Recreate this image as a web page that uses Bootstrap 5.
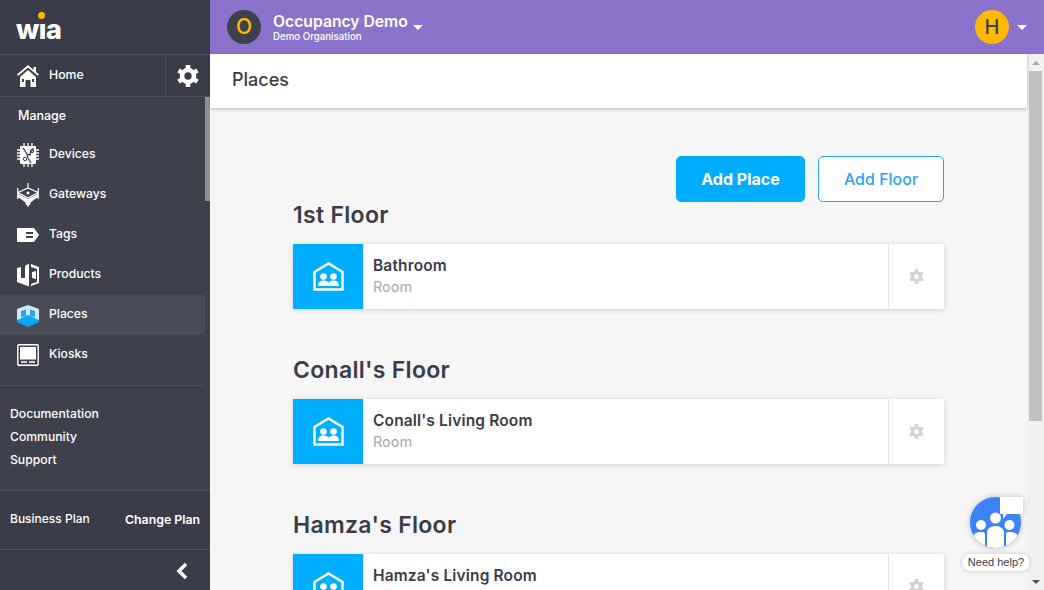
<!DOCTYPE html>
<html lang="en"><head><meta charset="utf-8"><title>Places</title>
<link href="https://cdn.jsdelivr.net/npm/bootstrap@5.3.0/dist/css/bootstrap.min.css" rel="stylesheet">
<style>
html,body{height:100%;overflow:hidden}
body{font-family:"Inter","Liberation Sans",sans-serif;color:#3a3c4a;background:#f6f6f6}
.app-shell{height:590px}
.side-bar{width:210px;flex:none;background:#3a3c49;color:#fff}
.logo-row{height:54px;flex:none;padding-left:16px}
.wia-logo{font-weight:800;font-size:27px;line-height:1;letter-spacing:-.5px;position:relative;margin-top:4px}
.wia-dot{position:absolute;left:21.500px;top:-4px;width:7px;height:7px;border-radius:50%;background:#ffb900}
.home-row{height:43px;flex:none;border-top:1px solid #4d4f5c;border-bottom:1px solid #4d4f5c}
.home-link{width:166px;padding-left:17px;gap:10px;font-size:12.300px;font-weight:500;border-right:1px solid #4d4f5c}
.side-scroll{height:393px;flex:none;background:#3e404e;overflow:hidden}
.side-content{width:205px}
.thumb-track{width:5px}
.thumb-bar{height:104px;background:#929292}
.manage-label{font-size:12.500px;font-weight:500;padding:9px 0 0 18px;height:38px;line-height:20px}
.nav-entry{height:40px;padding-left:17px;padding-bottom:1px;gap:10px;font-size:12.200px;font-weight:500}
.nav-entry.is-on{background:#494c58}
.nav-ico{width:22px;height:24px;flex:none}
.doc-links{border-top:1px solid #4d4f5c;margin-top:10px;padding:16px 0 0 10px;font-size:12.200px;font-weight:500;line-height:23px}
.plan-row{height:59px;flex:none;border-top:1px solid #4d4f5c;padding:0 10px 2px;font-size:12px;font-weight:500}
.plan-change{font-size:12.300px;font-weight:600;margin-top:2px}
.collapse-row{height:42px;flex:none;border-top:1px solid #4d4f5c;padding-right:21px}
.top-bar{height:54px;flex:none;background:#8b72cb;color:#fff;padding:0 17px}
.org-avatar{width:34px;height:34px;border-radius:50%;background:#3e404e;color:#ffb900;font-size:21px;font-weight:500;line-height:34px;text-align:center}
.org-name{font-size:15.700px;font-weight:600;line-height:19px}
.org-sub{font-size:9.700px;font-weight:500;line-height:12px}
.org-caret{margin-left:5px}
.caret-mark{width:0;height:0;border:5px solid transparent;border-top:5px solid #fff;border-bottom:0}
.user-avatar{width:34px;height:34px;border-radius:50%;background:#ffb900;color:#3e404e;font-size:20px;font-weight:500;line-height:34px;text-align:center}
.body-row{height:536px}
.page-wrap{min-width:0}
.page-bar{height:54px;flex:none;background:#fff;padding:0 0 3px 22px;font-size:18px;font-weight:500;box-shadow:0 1px 3px rgba(0,0,0,.28);position:relative}
.page-main{overflow:hidden;background:#f6f6f6;padding:48px 83px 0 83px}
.fake-scroll{width:17px;flex:none;background:#f1f1f1}
.arrow-up,.arrow-down{height:17px;flex:none}
.arrow-up::before,.arrow-down::before{content:"";width:0;height:0;border:4px solid transparent}
.arrow-up::before{border-bottom:4px solid #a3a3a3;border-top:0}
.arrow-down::before{border-top:4px solid #505050;border-bottom:0}
.scroll-thumb{width:13px;height:350px;margin:0 2px;background:#c1c1c1}
.btn-place,.btn-floor{height:46px;font-size:16px;border-radius:5px}
.btn-place{width:129px;background:#00aeff;border:1px solid #00aeff;color:#fff;font-weight:700}
.btn-floor{width:126px;background:#fff;border:1px solid #2aa5ef;color:#2aa5ef;font-weight:500}
.action-row{gap:13px;height:46px}
.floor-block{height:155px}
.floor-title{font-size:23px;font-weight:600;line-height:28px;letter-spacing:.3px;margin:0 0 15px;color:#3a3c4a}
.first-floor{margin-top:-1px}
.room-card{height:65px;background:#fff;box-shadow:0 1px 5px rgba(0,0,0,.16)}
.room-ico{width:70px;flex:none;background:#00aeff}
.room-text{padding:12px 0 0 10px}
.room-name{font-size:15.500px;font-weight:600;line-height:20px;letter-spacing:.15px;color:#3a3c4a}
.room-kind{font-size:14.500px;line-height:20px;color:#a8a8ae;margin-top:1px}
.room-gear{width:56px;flex:none;border-left:1px solid #e6e6e6}
.help-widget{position:absolute;left:962px;top:497px;width:68px}
.help-circle{width:51px;height:51px;margin:0 0 0 8px;display:block;overflow:visible;filter:drop-shadow(0 0 3px rgba(0,0,0,.22))}
.help-tag{position:absolute;left:0;top:57px;width:68px;height:17px;border-radius:9px;background:#fff;box-shadow:0 0 4px rgba(0,0,0,.2);font-family:"Liberation Sans",sans-serif;font-size:11px;line-height:17px;text-align:center;color:#3a3c4a}
</style></head>
<body>
<svg width="0" height="0" class="position-absolute"><defs>
 <symbol id="cog" viewBox="0 0 24 24"><circle cx="12" cy="12" r="6.500" fill="none" stroke="currentColor" stroke-width="5"/><path stroke="currentColor" stroke-width="5" d="M12 0v6M12 18v6M1.600 6l5.200 3M17.200 15l5.200 3M22.400 6l-5.200 3M6.800 15l-5.200 3"/></symbol>
 <symbol id="roomic" viewBox="0 0 31 29"><path d="M1.500 27.500V10L15.500 1.500 29.500 10v17.500z" fill="none" stroke="#fff" stroke-width="2.400"/><circle cx="10.500" cy="14.500" r="3.300" fill="#fff"/><circle cx="20.500" cy="14.500" r="3.300" fill="#fff"/><path fill="#fff" d="M5 24c0-4 2-5.500 5.500-5.500 2 0 3.500.5 5 2 1.500-1.500 3-2 5-2 3.500 0 5.500 1.500 5.500 5.500z"/></symbol>
</defs></svg>
<div class="app-shell d-flex">
 <aside class="side-bar d-flex flex-column">
  <div class="logo-row d-flex align-items-center"><span class="wia-logo">wıa<span class="wia-dot"></span></span></div>
  <div class="home-row d-flex">
   <a class="home-link d-flex align-items-center text-white text-decoration-none">
    <svg class="nav-ico" viewBox="0 0 22 24" fill="#fff"><path d="M11 1 0 10.500l1.200 1.300L11 3.600l9.800 8.200 1.200-1.300-3-2.600V3h-2.500v3z"/><path fill-rule="evenodd" d="M3 13 11 6l8 7v10h-5.500v-7h-5v7H3zM5 15v3h2v-3zM15 15v3h2v-3z"/></svg>
    Home</a>
   <div class="flex-fill d-flex align-items-center justify-content-center text-white">
    <svg width="22" height="22"><use href="#cog"/></svg>
   </div>
  </div>
  <div class="side-scroll d-flex">
   <div class="side-content">
    <div class="manage-label">Manage</div>
    <a class="nav-entry d-flex align-items-center text-white text-decoration-none"><svg class="nav-ico" viewBox="0 0 22 24"><path fill="#fff" d="M4 3h14a1 1 0 0 1 1 1v16a1 1 0 0 1-1 1H4a1 1 0 0 1-1-1V4a1 1 0 0 1 1-1z"/><path stroke="#fff" stroke-width="1.300" d="M0 7h3M0 10h3M0 13h3M0 16h3M19 7h3M19 10h3M19 13h3M19 16h3M7 0v3M11 0v3M15 0v3M7 21v3M11 21v3M15 21v3"/><path fill="none" stroke="#3e404e" stroke-width="1.300" d="M6 5l4 6 1 4 3 5M16 5c0 4-3 3-3 7l-3-1"/><circle cx="8" cy="16" r="1.700" fill="none" stroke="#3e404e"/><circle cx="15" cy="8" r="1.700" fill="none" stroke="#3e404e"/></svg>Devices</a>
    <a class="nav-entry d-flex align-items-center text-white text-decoration-none"><svg class="nav-ico" viewBox="0 0 22 24"><path fill="none" stroke="#fff" stroke-width="1.200" d="M11 0v6M.7 5v11M21.300 5v11M1 9.500 11 5l10 4.500L11 15z"/><path fill="#fff" d="M1 11l10 5 10-5v3l-7.500 5.500h-5L1 14z"/><circle cx="11" cy="20" r="2.500" fill="#fff"/><path stroke="#fff" d="M11 20v4"/><circle cx="11" cy="10" r="1.500" fill="#fff"/></svg>Gateways</a>
    <a class="nav-entry d-flex align-items-center text-white text-decoration-none"><svg class="nav-ico" viewBox="0 0 22 24"><path fill="#fff" d="M0 5h17l5 7-5 7H0z"/><path stroke="#3e404e" stroke-width="1.800" d="M9 10h7M9 14h7"/></svg>Tags</a>
    <a class="nav-entry d-flex align-items-center text-white text-decoration-none"><svg class="nav-ico" viewBox="0 0 22 24" fill="#fff"><path d="M0 5l4-1v11h4V3l4-2.500v23L0 19z"/><path d="M14 1l8 3v16l-8 3v-2l6-2V6l-6-2z"/><path d="M15 9l4-1v8l-4-1z"/></svg>Products</a>
    <a class="nav-entry is-on d-flex align-items-center text-white text-decoration-none"><svg class="nav-ico" viewBox="0 0 22 24"><path fill="#cdeafc" d="M0 6 11 2l11 4v11l-11 5L0 17z"/><path fill="#2f9fe6" d="M4 8l5-1.500V13l-5 1zM13 6.500 18 8v6l-5-1z"/><path fill="#0aa5f0" d="M0 17l11-5 11 5v2l-11 5L0 19z"/></svg>Places</a>
    <a class="nav-entry d-flex align-items-center text-white text-decoration-none"><svg class="nav-ico" viewBox="0 0 22 24"><rect x=".8" y="1.800" width="20.400" height="20.400" rx="1" fill="none" stroke="#fff" stroke-width="1.400"/><rect x="3" y="4" width="16" height="12.500" fill="#fff"/><path stroke="#fff" stroke-width="1.500" d="M4 19h6M12 19h6"/></svg>Kiosks</a>
    <div class="doc-links"><div>Documentation</div><div>Community</div><div>Support</div></div>
   </div>
   <div class="thumb-track"><div class="thumb-bar"></div></div>
  </div>
  <div class="plan-row d-flex align-items-center justify-content-between"><span>Business Plan</span><span class="plan-change">Change Plan</span></div>
  <div class="collapse-row d-flex align-items-center justify-content-end"><svg width="14" height="18" viewBox="0 0 14 18"><path d="M11 2 4 9l7 7" fill="none" stroke="#fff" stroke-width="3.500"/></svg></div>
 </aside>
 <div class="flex-fill d-flex flex-column page-wrap">
  <div class="top-bar d-flex align-items-center">
   <div class="org-avatar">O</div>
   <div class="ms-2 ps-1"><div class="org-name">Occupancy Demo</div><div class="org-sub">Demo Organisation</div></div>
   <span class="caret-mark org-caret"></span>
   <div class="user-avatar ms-auto">H</div>
   <span class="caret-mark ms-2"></span>
  </div>
  <div class="body-row d-flex">
   <div class="page-wrap flex-fill d-flex flex-column">
    <div class="page-bar d-flex align-items-center">Places</div>
    <div class="page-main flex-fill">
     <div class="action-row d-flex justify-content-end">
      <button class="btn btn-place p-0">Add Place</button>
      <button class="btn btn-floor p-0">Add Floor</button>
     </div>
     <div class="floor-block first-floor">
      <h2 class="floor-title">1st Floor</h2>
      <div class="room-card d-flex">
       <div class="room-ico d-flex align-items-center justify-content-center"><svg width="31" height="29"><use href="#roomic"/></svg></div>
       <div class="room-text flex-fill"><div class="room-name">Bathroom</div><div class="room-kind">Room</div></div>
       <div class="room-gear d-flex align-items-center justify-content-center"><svg width="15" height="15" color="#d2d2d6"><use href="#cog"/></svg></div>
      </div>
     </div>
     <div class="floor-block">
      <h2 class="floor-title">Conall's Floor</h2>
      <div class="room-card d-flex">
       <div class="room-ico d-flex align-items-center justify-content-center"><svg width="31" height="29"><use href="#roomic"/></svg></div>
       <div class="room-text flex-fill"><div class="room-name">Conall's Living Room</div><div class="room-kind">Room</div></div>
       <div class="room-gear d-flex align-items-center justify-content-center"><svg width="15" height="15" color="#d2d2d6"><use href="#cog"/></svg></div>
      </div>
     </div>
     <div class="floor-block">
      <h2 class="floor-title">Hamza's Floor</h2>
      <div class="room-card d-flex">
       <div class="room-ico d-flex align-items-center justify-content-center"><svg width="31" height="29"><use href="#roomic"/></svg></div>
       <div class="room-text flex-fill"><div class="room-name">Hamza's Living Room</div></div>
       <div class="room-gear d-flex align-items-center justify-content-center"><svg width="15" height="15" color="#d2d2d6"><use href="#cog"/></svg></div>
      </div>
     </div>
    </div>
   </div>
   <div class="fake-scroll d-flex flex-column">
    <div class="arrow-up d-flex align-items-center justify-content-center"></div>
    <div class="scroll-thumb"></div>
    <div class="flex-fill"></div>
    <div class="arrow-down d-flex align-items-center justify-content-center"></div>
   </div>
  </div>
 </div>
 <div class="help-widget">
  <svg class="help-circle" viewBox="0 0 51 51"><defs><clipPath id="hc"><circle cx="25.500" cy="25.500" r="25.500"/></clipPath></defs><circle cx="25.500" cy="25.500" r="25.500" fill="#3b82f6"/><path fill="#fff" d="M30 0h23v17H37l-4 5v-5h-3z"/><g clip-path="url(#hc)" fill="#fff"><circle cx="11" cy="28" r="5"/><circle cx="25.500" cy="21" r="5.500"/><circle cx="39.500" cy="28" r="5"/><path d="M3 51V41c0-4 3-6 8-6 2 0 3 .5 4 1v15z"/><path d="M17 51V36c0-4 3-7 8.500-7s8.500 3 8.500 7v15z"/><path d="M36 51V36c1-.5 2-1 4-1 5 0 8 2 8 6v10z"/></g></svg>
  <div class="help-tag">Need help?</div>
 </div>
</div>
</body></html>
